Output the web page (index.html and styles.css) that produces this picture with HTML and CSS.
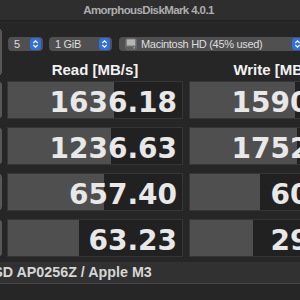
FILE: index.html
```html
<!DOCTYPE html>
<html lang="en">

<head>
    <meta charset="UTF-8">
    <meta name="viewport" content="width=device-width, initial-scale=1.0">
    <title>AmorphousDiskMark</title>
    <link rel="stylesheet" href="styles.css">
</head>

<body>
    <div class="window">
        <div class="titlebar">AmorphousDiskMark 4.0.1</div>

        <!-- Toolbar + column headers -->
        <div class="top">
            <div class="side-btn all-btn"></div>
            <div class="top-main">
                <div class="toolbar">
                    <div class="popup popup-count">
                        <span class="popup-label">5</span>
                        <svg class="stepper" viewBox="0 0 11 12"><rect width="11" height="12" rx="3" fill="#2f6fe4"/><polyline points="3.3,5 5.5,2.9 7.7,5" fill="none" stroke="#fff" stroke-width="1.2"/><polyline points="3.3,7 5.5,9.1 7.7,7" fill="none" stroke="#fff" stroke-width="1.2"/></svg>
                    </div>
                    <div class="popup popup-size">
                        <span class="popup-label">1 GiB</span>
                        <svg class="stepper" viewBox="0 0 11 12"><rect width="11" height="12" rx="3" fill="#2f6fe4"/><polyline points="3.3,5 5.5,2.9 7.7,5" fill="none" stroke="#fff" stroke-width="1.2"/><polyline points="3.3,7 5.5,9.1 7.7,7" fill="none" stroke="#fff" stroke-width="1.2"/></svg>
                    </div>
                    <div class="popup popup-disk">
                        <svg class="disk-icon" viewBox="0 0 12 12"><rect x="0.5" y="0.5" width="11" height="11" rx="1.5" fill="#7d7d7d"/><rect x="2" y="1.5" width="8" height="6" rx="0.5" fill="#b4b4b4"/><rect x="1" y="8.5" width="10" height="2.5" fill="#5e5e5e"/><rect x="8.5" y="9.3" width="1.5" height="1" fill="#c8c8c8"/></svg>
                        <span class="popup-label">Macintosh HD (45% used)</span>
                        <svg class="stepper" viewBox="0 0 11 12"><rect width="11" height="12" rx="3" fill="#2f6fe4"/><polyline points="3.3,5 5.5,2.9 7.7,5" fill="none" stroke="#fff" stroke-width="1.2"/><polyline points="3.3,7 5.5,9.1 7.7,7" fill="none" stroke="#fff" stroke-width="1.2"/></svg>
                    </div>
                </div>
                <div class="heads">
                    <div class="head read">Read [MB/s]</div>
                    <div class="head write">Write [MB/s]</div>
                </div>
            </div>
        </div>

        <!-- Results -->
        <div class="board">
            <div class="row">
                <div class="side-btn"></div>
                <div class="cell read"><div class="bar" style="width: 106px"></div><span class="value">1636.18</span></div>
                <div class="cell write"><div class="bar" style="width: 105px"></div><span class="value">1590.64</span></div>
            </div>
            <div class="row">
                <div class="side-btn"></div>
                <div class="cell read"><div class="bar" style="width: 103px"></div><span class="value">1236.63</span></div>
                <div class="cell write"><div class="bar" style="width: 107px"></div><span class="value">1752.31</span></div>
            </div>
            <div class="row">
                <div class="side-btn"></div>
                <div class="cell read"><div class="bar" style="width: 96px"></div><span class="value">657.40</span></div>
                <div class="cell write"><div class="bar" style="width: 70px"></div><span class="value">60.12</span></div>
            </div>
            <div class="row">
                <div class="side-btn"></div>
                <div class="cell read"><div class="bar" style="width: 71px"></div><span class="value">63.23</span></div>
                <div class="cell write"><div class="bar" style="width: 63px"></div><span class="value">29.85</span></div>
            </div>
        </div>

        <div class="status">APPLE SSD AP0256Z / Apple M3</div>
    </div>
</body>
</html>
```

FILE: styles.css
```css
* {
    margin: 0;
    padding: 0;
    box-sizing: border-box;
}

body {
    width: 300px;
    height: 300px;
    overflow: hidden;
    background-color: #262626;
    font-family: 'Liberation Sans', Arial, sans-serif;
    color: #e6e6e6;
}

.window {
    width: 457px;
    margin-left: -80px;
}

.titlebar {
    height: 21px;
    line-height: 20px;
    text-align: center;
    font-size: 11.5px;
    font-weight: bold;
    letter-spacing: -0.6px;
    color: #adadad;
    background-color: #2e2e2e;
    border-bottom: 1px solid #222222;
}

.side-btn {
    flex: none;
    width: 82px;
    background-color: #575757;
    border-radius: 0 3px 3px 0;
}

.top {
    display: flex;
    height: 60px;
}

.all-btn {
    margin-top: 8px;
    height: 46px;
}

.top-main {
    margin-left: 5px;
    display: flex;
    flex-direction: column;
}

.toolbar {
    display: flex;
    gap: 6px;
    padding: 16px 0 0 1px;
}

.popup {
    flex: none;
    display: flex;
    align-items: center;
    height: 14px;
    padding: 0 2px 0 6px;
    border-radius: 4px;
    background-color: #505050;
    font-size: 11px;
    letter-spacing: -0.3px;
    color: #dedede;
}

.popup-label {
    flex: 1;
    line-height: 14px;
    white-space: nowrap;
}

.stepper {
    flex: none;
    width: 11px;
    height: 12px;
}

.popup-count {
    width: 35px;
}

.popup-size {
    width: 63px;
}

.popup-disk {
    width: 186px;
    margin-left: 1px;
}

.disk-icon {
    flex: none;
    width: 12px;
    height: 12px;
    margin-right: 4px;
}

.heads {
    display: flex;
    height: 30px;
}

.head {
    flex: none;
    width: 176px;
    padding-top: 4px;
    line-height: 30px;
    text-align: center;
    font-size: 15px;
    font-weight: bold;
    color: #f2f2f2;
}

.head.write {
    margin-left: 6px;
}

.board {
    display: flex;
    flex-direction: column;
    gap: 8px;
}

.row {
    display: flex;
    height: 38px;
}

.row .side-btn {
    margin: 1px 0;
}

.cell {
    flex: none;
    position: relative;
    width: 176px;
    display: flex;
    justify-content: flex-end;
    align-items: center;
    padding: 5px 5px 0 0;
    background-color: #212121;
    border: 1px solid #363636;
}

.cell.read {
    margin-left: 5px;
}

.cell.write {
    margin-left: 6px;
}

.bar {
    position: absolute;
    top: 0;
    bottom: 0;
    left: 0;
    background-color: #4f4f4f;
}

.value {
    position: relative;
    font-family: 'DejaVu Sans', Verdana, sans-serif;
    font-size: 28px;
    font-weight: bold;
    line-height: 28px;
    color: #e8e8e8;
}

.status {
    margin-top: 5px;
    height: 22px;
    padding-left: 12px;
    line-height: 21px;
    font-size: 14.3px;
    font-weight: bold;
    color: #d6d6d6;
    white-space: nowrap;
    background-color: #313131;
    border-bottom: 1px solid #474747;
}
```
